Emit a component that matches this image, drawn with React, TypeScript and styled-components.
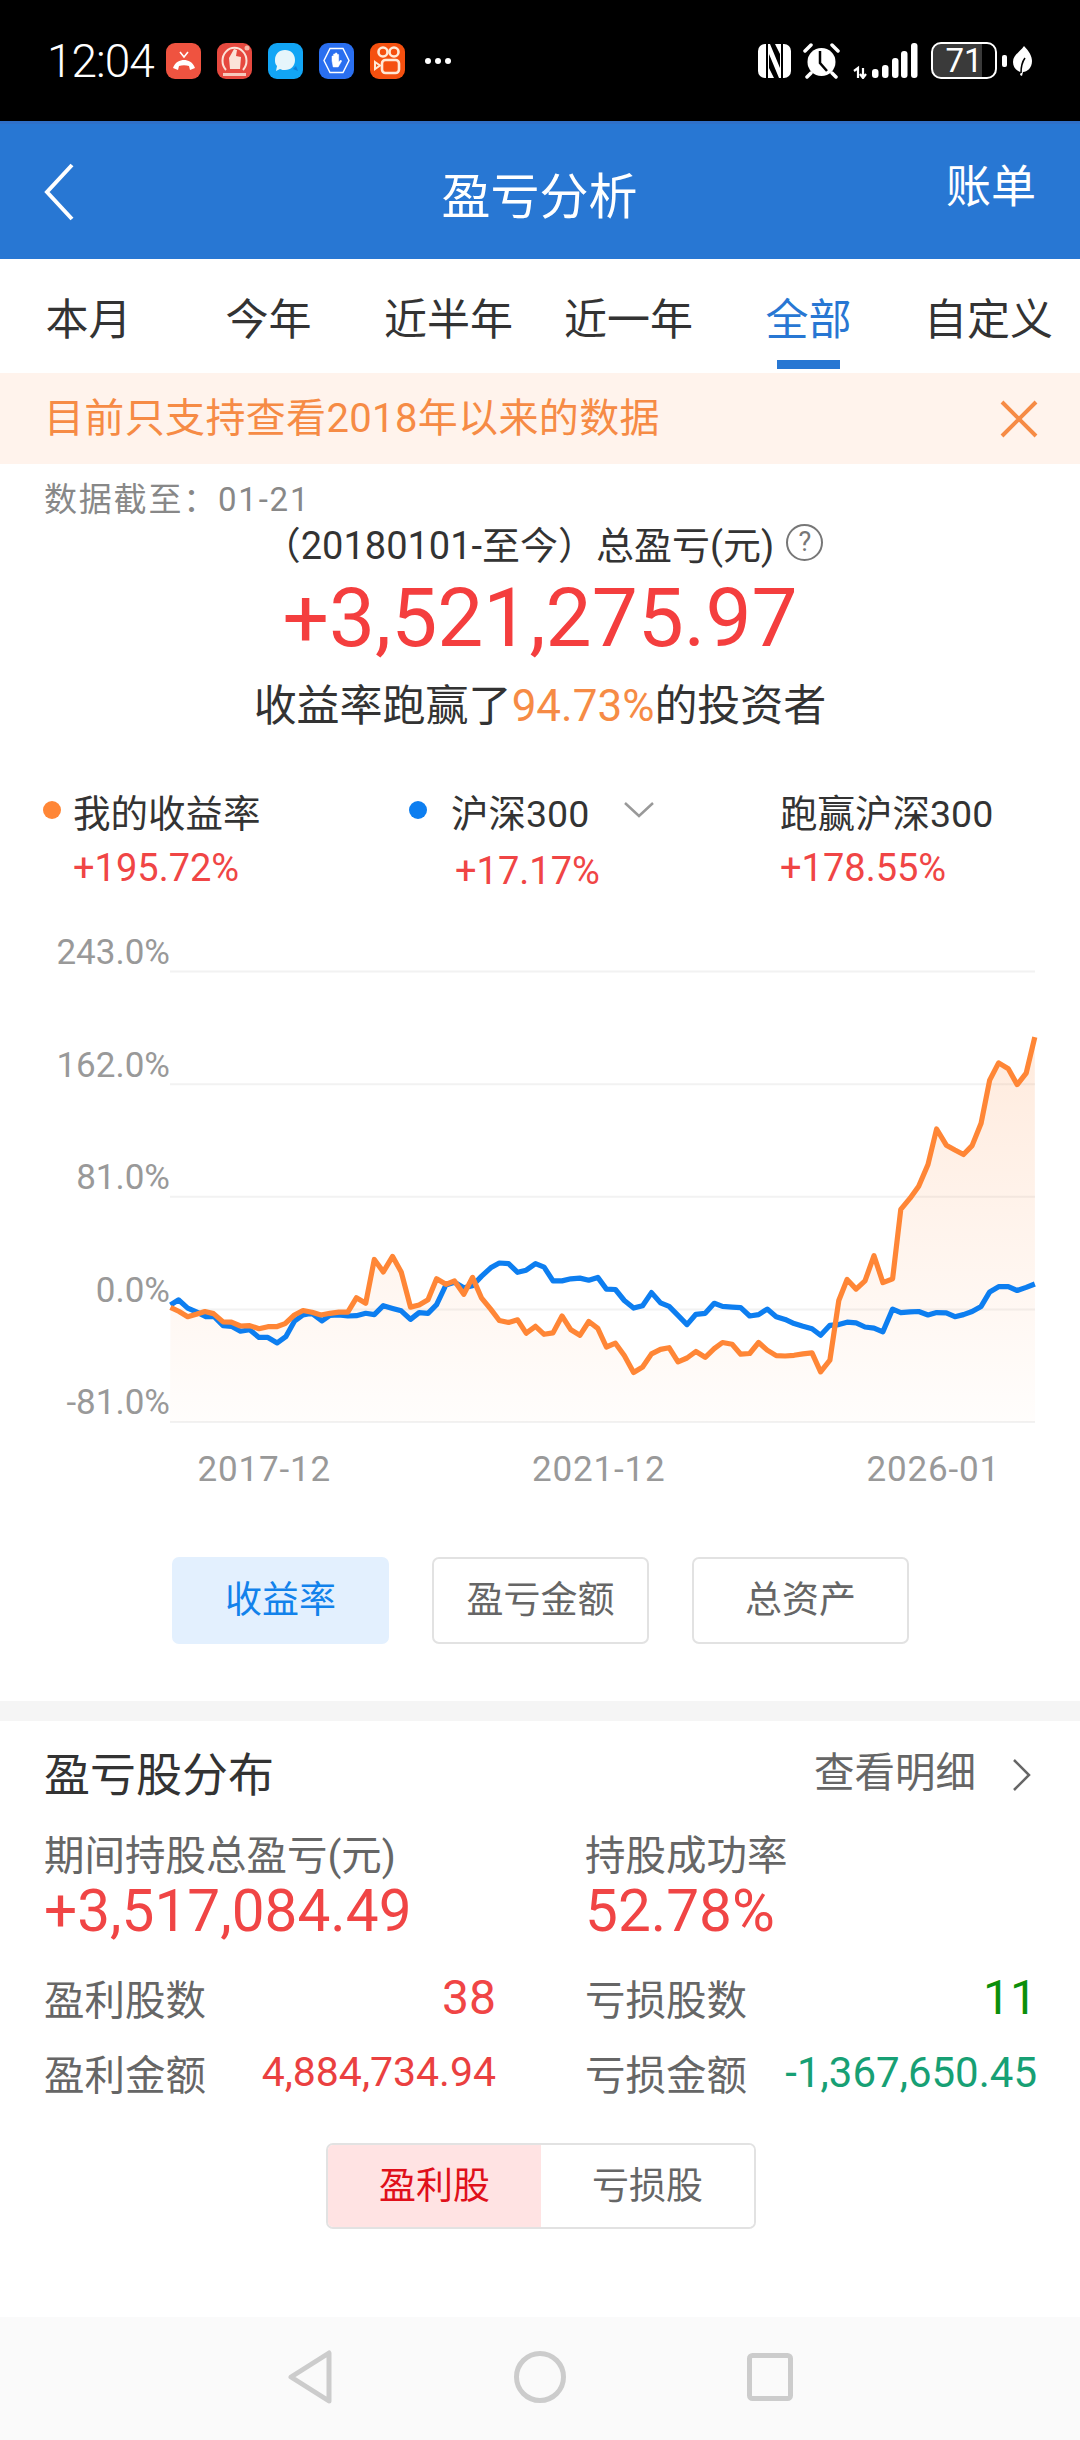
import React from "react";
import styled, { createGlobalStyle } from "styled-components";

const GlobalStyle = createGlobalStyle`
    html, body {
        margin: 0;
        padding: 0;
        background: #fff;
    }
    * {
        box-sizing: border-box;
    }
`
const Page = styled.div`
    width: 1080px;
    height: 2440px;
    display: flex;
    flex-direction: column;
    background: #fff;
    overflow: hidden;
    font-family: Roboto, "Noto Sans CJK SC", sans-serif;
    color: #333;
`
const StatusBar = styled.div`
    height: 121px;
    flex: none;
    background: #000;
    display: flex;
    align-items: center;
    padding: 0 48px 0 47px;
    color: #fff;
`
const Clock = styled.span`
    width: 119px;
    font-size: 46px;
    line-height: 50px;
    letter-spacing: -1px;
    font-weight: 300;
`
const AppTiles = styled.div`
    display: flex;
    gap: 16px;
`
const AppTile = styled.div<{ $bg: string }>`
    width: 35px;
    height: 36px;
    border-radius: 9px;
    background: ${(p) => p.$bg};
    display: flex;
    align-items: center;
    justify-content: center;
`
const MoreDots = styled.span`
    display: flex;
    gap: 4px;
    margin-left: 20px;

    i {
        width: 6px;
        height: 6px;
        border-radius: 50%;
        background: #fff;
    }
`
const StatusRight = styled.div`
    margin-left: auto;
    display: flex;
    align-items: center;
`
const Battery = styled.div`
    width: 66px;
    height: 37px;
    margin-left: 13px;
    border: 2.5px solid #fff;
    border-radius: 10px;
    overflow: hidden;
    display: flex;
    align-items: center;
    justify-content: center;
    font-size: 33px;
    line-height: 32px;
    background: linear-gradient(90deg, #3a3a3a 79%, #000 79%);
`
const BatteryNub = styled.i`
    width: 5px;
    height: 12px;
    margin-left: 5px;
    border-radius: 2px;
    background: #fff;
`
const Header = styled.div`
    height: 138px;
    flex: none;
    background: #2877d3;
    border-top: 3px solid #2f70c8;
    display: grid;
    grid-template-columns: 1fr auto 1fr;
    align-items: center;
    padding: 0 44px 0 43px;
    color: #fff;
`
const Title = styled.div`
    font-size: 49px;
    line-height: 56px;
    margin-top: 12px;
`
const Bill = styled.div`
    justify-self: end;
    font-size: 45px;
    line-height: 52px;
    margin-top: -8px;
`
const Tabs = styled.div`
    height: 114px;
    flex: none;
    display: grid;
    grid-template-columns: repeat(6, 180px);
`
const Tab = styled.div<{ $active?: boolean }>`
    display: flex;
    flex-direction: column;
    align-items: center;
    padding: 36px 3px 0 0;
    font-size: 43px;
    line-height: 50px;
    color: ${(p) => (p.$active ? "#2877d3" : "#333")};
`
const TabMark = styled.i`
    width: 63px;
    height: 9px;
    margin-top: 15px;
    background: #2877d3;
`
const Notice = styled.div`
    height: 91px;
    flex: none;
    background: #fff3ec;
    color: #f68b45;
    display: flex;
    align-items: center;
    justify-content: space-between;
    padding: 0 42px 8px 44px;
    font-size: 40px;
    letter-spacing: 0.35px;

    svg {
        margin-top: 8px;
    }
`
const DateLine = styled.div`
    margin-top: 16px;
    padding-left: 44px;
    font-size: 33px;
    line-height: 40px;
    letter-spacing: 1.8px;
    color: #888;
`
const TotalLine = styled.div`
    margin-top: 2px;
    height: 40px;
    display: flex;
    align-items: center;
    justify-content: center;
    padding-left: 6px;
    font-size: 38px;
    color: #333;
`
const HelpMark = styled.span`
    width: 37px;
    height: 37px;
    margin-left: 12px;
    border: 2px solid #777;
    border-radius: 50%;
    display: flex;
    align-items: center;
    justify-content: center;
    font-size: 27px;
    color: #777;
`
const BigAmount = styled.div`
    margin-top: 10px;
    text-align: center;
    font-size: 82px;
    line-height: 92px;
    color: #f43e3e;
`
const Beat = styled.div`
    margin-top: 17px;
    text-align: center;
    font-size: 43px;
    line-height: 50px;
    color: #333;

    em {
        font-style: normal;
        font-size: 44px;
        color: #f68b45;
    }
`
const Legend = styled.div`
    margin-top: 59px;
    padding-left: 43px;
    display: grid;
    grid-template-columns: 366px 371px 1fr;
`
const LegendHead = styled.div`
    height: 40px;
    display: flex;
    align-items: center;
    font-size: 37.5px;
    color: #333;
`
const LegendDot = styled.i<{ $color: string; $gap: number }>`
    width: 18px;
    height: 18px;
    margin-right: ${(p) => p.$gap}px;
    border-radius: 50%;
    background: ${(p) => p.$color};
`
const LegendValue = styled.div<{ $indent: number; $drop?: boolean }>`
    margin-top: ${(p) => (p.$drop ? 21 : 18)}px;
    padding-left: ${(p) => p.$indent}px;
    font-size: 38px;
    line-height: 40px;
    color: #f04545;
`
const ChartBlock = styled.div`
    margin-top: 43px;
    height: 488px;
    display: flex;
`
const AxisLabels = styled.div`
    width: 170px;
    flex: none;
    display: flex;
    flex-direction: column;
    gap: 75.2px;
    align-items: flex-end;
`
const AxisLabel = styled.span`
    height: 37.4px;
    font-size: 35px;
    line-height: 37px;
    color: #999;
`
const Plot = styled.svg`
    display: block;
    overflow: visible;
`
const DateAxis = styled.div`
    margin-top: 28px;
    padding-left: 97px;
    display: grid;
    grid-template-columns: repeat(3, 334.5px);
    text-align: center;
    font-size: 35px;
    line-height: 40px;
    letter-spacing: 0.8px;
    color: #999;
`
const ChartButtons = styled.div`
    margin-top: 67px;
    padding-left: 172px;
    display: flex;
    gap: 43px;
`
const ChartButton = styled.div<{ $active?: boolean }>`
    width: 217px;
    height: 87px;
    padding-bottom: 7px;
    border-radius: 7px;
    display: flex;
    align-items: center;
    justify-content: center;
    font-size: 37px;
    border: 2px solid ${(p) => (p.$active ? "#e3f0fe" : "#e2e2e2")};
    background: ${(p) => (p.$active ? "#e3f0fe" : "#fff")};
    color: ${(p) => (p.$active ? "#1282eb" : "#666")};
`
const Divider = styled.div`
    margin-top: 57px;
    height: 20px;
    flex: none;
    background: #f5f5f5;
`
const Section = styled.div`
    padding: 29px 43px 0 44px;
`
const SectionHead = styled.div`
    height: 50px;
    display: flex;
    align-items: center;
    justify-content: space-between;
`
const SectionTitle = styled.div`
    font-size: 46px;
    line-height: 50px;
    color: #333;
`
const DetailLink = styled.div`
    display: flex;
    align-items: center;
    gap: 36px;
    padding-right: 5px;
    font-size: 40.5px;
    line-height: 44px;
    color: #666;

    span {
        margin-top: -4px;
    }
`
const StatGrid = styled.div`
    margin-top: 34px;
    display: grid;
    grid-template-columns: 452px 452px;
    column-gap: 89px;
`
const StatLabel = styled.div`
    font-size: 40.5px;
    line-height: 44px;
    color: #666;
`
const StatValue = styled.div`
    margin-top: 3px;
    font-size: 58.5px;
    line-height: 60px;
    color: #f04545;
`
const DetailRow = styled.div<{ $gap: number }>`
    margin-top: ${(p) => p.$gap}px;
    height: 50px;
    display: flex;
    align-items: center;
    justify-content: space-between;
    font-size: 40.5px;
    color: #666;
`
const DetailValue = styled.span<{ $color: string; $size: number }>`
    font-size: ${(p) => p.$size}px;
    color: ${(p) => p.$color};
`
const Toggle = styled.div`
    margin: 46px 0 0 282px;
    width: 430px;
    height: 86px;
    display: flex;
    border: 2px solid #e2e2e2;
    border-radius: 7px;
    overflow: hidden;
    font-size: 37px;
`
const ToggleItem = styled.div<{ $active?: boolean }>`
    flex: 1;
    display: flex;
    align-items: center;
    justify-content: center;
    padding-bottom: 7px;
    background: ${(p) => (p.$active ? "#ffe3e3" : "#fff")};
    color: ${(p) => (p.$active ? "#e0101a" : "#666")};
`
const NavBar = styled.div`
    margin-top: auto;
    height: 123px;
    flex: none;
    background: #fafafa;
    display: flex;
    align-items: center;
    padding: 0 0 4px 287px;
    gap: 181px;
`

// points read off the reference, in units of its 2.904x crop
const orangeLine = [
    495,1125,520,1137,545,1152,570,1145,595,1137,620,1143,648,1167,672,1168,698,1179,725,1178,752,1187,778,1181,803,1181,828,1172,855,1147,880,1134,906,1139,932,1147,958,1142,984,1139,1010,1139,1035,1097,1062,1113,1087,986,1113,1022,1140,977,1165,1022,1192,1124,1217,1118,1243,1103,1268,1042,1295,1058,1320,1048,1347,1087,1372,1038,1398,1097,1425,1130,1450,1163,1477,1169,1503,1161,1528,1200,1555,1180,
    1580,1203,1606,1199,1632,1150,1658,1190,1684,1206,1710,1166,1736,1186,1761,1240,1787,1229,1813,1265,1840,1314,1866,1298,1892,1260,1918,1247,1943,1242,1969,1283,1995,1272,2021,1253,2048,1270,2074,1245,2098,1227,2126,1232,2151,1261,2177,1259,2203,1227,2228,1249,2254,1265,2280,1266,2306,1264,2332,1260,2358,1257,2383,1312,2410,1278,2436,1105,2460,1044,2486,1072,2512,1048,2538,975,2564,1053,2592,1042,2616,840,2643,808,2668,773,2695,710,2720,607,2748,654,2773,668,2798,681,2823,655,2849,590,2874,465,2900,415,2928,432,2954,478,2980,445,3005,340,
]
const blueLine = [
    495,1118,518,1103,545,1127,570,1138,598,1152,622,1152,648,1178,672,1180,698,1194,725,1190,752,1212,778,1212,805,1228,830,1210,855,1165,880,1147,906,1142,935,1164,958,1148,984,1147,1010,1150,1035,1149,1062,1142,1087,1146,1113,1120,1140,1128,1165,1135,1192,1160,1217,1140,1243,1142,1268,1117,1295,1060,1320,1052,1347,1068,1372,1062,1398,1035,1425,1010,1450,996,1477,998,1503,1023,1528,1017,1555,998,
    1580,1008,1606,1048,1632,1048,1658,1042,1684,1040,1710,1046,1736,1038,1761,1072,1787,1073,1813,1105,1840,1127,1866,1120,1892,1082,1918,1112,1943,1122,1969,1148,1995,1175,2021,1145,2048,1142,2074,1113,2098,1122,2126,1124,2151,1126,2177,1150,2203,1146,2228,1130,2254,1152,2280,1160,2306,1172,2332,1180,2358,1187,2383,1206,2410,1177,2436,1175,2460,1168,2486,1170,2512,1182,2538,1185,2564,1196,2592,1130,2616,1140,2643,1138,2668,1137,2695,1147,2720,1140,2748,1141,2773,1152,2798,1146,2823,1137,2849,1122,2874,1080,2900,1065,2928,1065,2954,1076,2980,1067,3005,1057,
]

const toPath = (pts: number[]) => {
    const out: string[] = []
    for (let i = 0; i < pts.length; i += 2) {
        const x = pts[i] / 2.904 - 170
        const y = pts[i + 1] / 2.904 + 920 - 934
        out.push(`${x.toFixed(1)},${y.toFixed(1)}`)
    }
    return out
}

const gridYs = [37.6, 150.2, 262.8, 375.4, 488]

const ProfitChart = () => {
    const orange = toPath(orangeLine)
    return (
        <Plot width="865" height="488" viewBox="0 0 865 488">
            <defs>
                <linearGradient id="profitFill" x1="0" y1="100" x2="0" y2="488" gradientUnits="userSpaceOnUse">
                    <stop offset="0" stopColor="#ff8636" stopOpacity="0.17" />
                    <stop offset="1" stopColor="#ff8636" stopOpacity="0.015" />
                </linearGradient>
            </defs>
            {gridYs.map((y) => (
                <line key={y} x1="0" x2="865" y1={y} y2={y} stroke="#f2f2f2" strokeWidth="2" />
            ))}
            <polygon points={`${orange.join(" ")} 865,488 0,488`} fill="url(#profitFill)" />
            <polyline points={toPath(blueLine).join(" ")} fill="none" stroke="#0d7ef0" strokeWidth="5.2" strokeLinejoin="round" />
            <polyline points={orange.join(" ")} fill="none" stroke="#ff8636" strokeWidth="5.2" strokeLinejoin="round" />
        </Plot>
    )
}

const MissedCallIcon = () => (
    <svg width="26" height="26" viewBox="0 0 26 26">
        <path d="M9 4l4 5 4-5" fill="none" stroke="#fff" strokeWidth="1.6" />
        <path d="M2 20c2-6 7-8 11-8s9 2 11 8l-5 2-1-4c-3-1-7-1-10 0l-1 4z" fill="#fff" />
    </svg>
)
const ThumbIcon = () => (
    <svg width="35" height="36" viewBox="0 0 35 36">
        <path d="M9 27a12 13 0 1 1 17 0" fill="none" stroke="#fbe3d8" strokeWidth="2" />
        <path d="M12 15l5-9 3 1-1 6 5 1-1 12H13z" fill="#fbe3d8" />
        <circle cx="30" cy="5" r="2.5" fill="#f6b7a8" />
        <rect x="6" y="30" width="23" height="3" fill="#f6c9bc" />
    </svg>
)
const BubbleIcon = () => (
    <svg width="28" height="28" viewBox="0 0 28 28">
        <path d="M21 22l5 2-2-5z" fill="#0f7fd8" />
        <path d="M13 3c6 0 10 4 10 10s-4 10-10 10c-2 0-3 0-5-1l-4 2 1-5c-2-2-2-4-2-6C3 7 7 3 13 3z" fill="#e6f5fb" />
    </svg>
)
const HandIcon = () => (
    <svg width="29" height="29" viewBox="0 0 29 29">
        <path d="M8 2.5h13l6 12-6 12H8l-6-12z" fill="none" stroke="#fff" strokeWidth="1.4" />
        <path d="M10 15V10h1.6v4V8h1.7v6V7h1.7v7V8.500h1.700V16l2-2 1 1-3.500 6h-5z" fill="#fff" stroke="#fff" strokeWidth="0.5" />
    </svg>
)
const KuaishouIcon = () => (
    <svg width="29" height="31" viewBox="0 0 29 31">
        <circle cx="10" cy="7" r="4.500" fill="none" stroke="#ffe9d6" strokeWidth="2.600" />
        <circle cx="21" cy="7" r="4.500" fill="none" stroke="#ffe9d6" strokeWidth="2.600" />
        <rect x="9" y="15" width="17" height="13" rx="3.500" fill="none" stroke="#ffe9d6" strokeWidth="2.600" />
        <path d="M2 17l5 3.500-5 3.500z" fill="none" stroke="#ffe9d6" strokeWidth="2" />
    </svg>
)
const NfcIcon = () => (
    <svg width="33" height="34" viewBox="0 0 33 34">
        <rect width="33" height="34" rx="7" fill="#fff" />
        <path d="M9 0v34M24 0v34" fill="none" stroke="#000" strokeWidth="2" />
        <path d="M12 0h5l5 10v14zM21 34h-5L11 24V10z" fill="#000" />
    </svg>
)
const AlarmIcon = () => (
    <svg width="37" height="36" viewBox="0 0 37 36" style={{ marginLeft: 12 }}>
        <circle cx="18.5" cy="19" r="14" fill="#fff" />
        <path d="M17 8v12l7 8" fill="none" stroke="#000" strokeWidth="2.500" />
        <path d="M2 8l6-6M35 8l-6-6M8 30l-4 4M29 30l4 4" stroke="#fff" strokeWidth="3.500" strokeLinecap="round" />
    </svg>
)
const SignalIcon = () => (
    <svg width="65" height="36" viewBox="0 0 65 36" style={{ marginLeft: 13 }}>
        <path d="M1 28l4-3v10M10 25v10M7 31l3 4 3-4" fill="none" stroke="#fff" strokeWidth="2.200" />
        {[
            [19, 26],
            [29, 22],
            [39, 15],
            [48, 8],
            [58, 0],
        ].map(([x, y]) => (
            <rect key={x} x={x} y={y} width="6.500" height={35 - y} rx="3" fill="#fff" />
        ))}
    </svg>
)
const LeafIcon = () => (
    <svg width="19" height="30" viewBox="0 0 19 30" style={{ marginLeft: 6 }}>
        <path d="M11 0c5 5 8 10 8 15 0 7-5 11-9 11l-1 4-2-1 1-3C3 25 0 21 0 16 0 9 7 6 11 0z" fill="#fff" />
        <path d="M8 27c0-6 1-11 4-15" fill="none" stroke="#000" strokeWidth="1.600" />
    </svg>
)

const App: React.FunctionComponent = () => {
    return (
        <Page>
            <GlobalStyle />
            <StatusBar>
                <Clock>12:04</Clock>
                <AppTiles>
                    <AppTile $bg="#ef5340"><MissedCallIcon /></AppTile>
                    <AppTile $bg="#e6493f"><ThumbIcon /></AppTile>
                    <AppTile $bg="#12a5f5"><BubbleIcon /></AppTile>
                    <AppTile $bg="#2a6ff0"><HandIcon /></AppTile>
                    <AppTile $bg="#f5500f"><KuaishouIcon /></AppTile>
                </AppTiles>
                <MoreDots><i /><i /><i /></MoreDots>
                <StatusRight>
                    <NfcIcon />
                    <AlarmIcon />
                    <SignalIcon />
                    <Battery>71</Battery>
                    <BatteryNub />
                    <LeafIcon />
                </StatusRight>
            </StatusBar>

            <Header>
                <svg width="32" height="58" viewBox="0 0 32 58">
                    <path d="M29 2L4 29l25 27" fill="none" stroke="#fff" strokeWidth="4" />
                </svg>
                <Title>盈亏分析</Title>
                <Bill>账单</Bill>
            </Header>

            <Tabs>
                <Tab>本月</Tab>
                <Tab>今年</Tab>
                <Tab>近半年</Tab>
                <Tab>近一年</Tab>
                <Tab $active>全部<TabMark /></Tab>
                <Tab>自定义</Tab>
            </Tabs>

            <Notice>
                目前只支持查看2018年以来的数据
                <svg width="38" height="38" viewBox="0 0 38 38">
                    <path d="M2 2l34 34M36 2L2 36" fill="none" stroke="#f68b45" strokeWidth="4" />
                </svg>
            </Notice>

            <DateLine>数据截至：01-21</DateLine>
            <TotalLine>
                （20180101-至今）总盈亏(元)
                <HelpMark>?</HelpMark>
            </TotalLine>
            <BigAmount>+3,521,275.97</BigAmount>
            <Beat>收益率跑赢了<em>94.73%</em>的投资者</Beat>

            <Legend>
                <div>
                    <LegendHead><LegendDot $color="#ff8636" $gap={12} />我的收益率</LegendHead>
                    <LegendValue $indent={30}>+195.72%</LegendValue>
                </div>
                <div>
                    <LegendHead>
                        <LegendDot $color="#0d7ef0" $gap={24} />沪深300
                        <svg width="30" height="16" viewBox="0 0 30 16" style={{ marginLeft: 35 }}>
                            <path d="M1 1l14 13L29 1" fill="none" stroke="#999" strokeWidth="2.500" />
                        </svg>
                    </LegendHead>
                    <LegendValue $indent={46} $drop>+17.17%</LegendValue>
                </div>
                <div>
                    <LegendHead>跑赢沪深300</LegendHead>
                    <LegendValue $indent={0}>+178.55%</LegendValue>
                </div>
            </Legend>

            <ChartBlock>
                <AxisLabels>
                    <AxisLabel>243.0%</AxisLabel>
                    <AxisLabel>162.0%</AxisLabel>
                    <AxisLabel>81.0%</AxisLabel>
                    <AxisLabel>0.0%</AxisLabel>
                    <AxisLabel>-81.0%</AxisLabel>
                </AxisLabels>
                <ProfitChart />
            </ChartBlock>
            <DateAxis>
                <span>2017-12</span>
                <span>2021-12</span>
                <span>2026-01</span>
            </DateAxis>

            <ChartButtons>
                <ChartButton $active>收益率</ChartButton>
                <ChartButton>盈亏金额</ChartButton>
                <ChartButton>总资产</ChartButton>
            </ChartButtons>

            <Divider />

            <Section>
                <SectionHead>
                    <SectionTitle>盈亏股分布</SectionTitle>
                    <DetailLink>
                        <span>查看明细</span>
                        <svg width="20" height="32" viewBox="0 0 20 32">
                            <path d="M2 1l15 15L2 31" fill="none" stroke="#666" strokeWidth="2.500" />
                        </svg>
                    </DetailLink>
                </SectionHead>
                <StatGrid>
                    <div>
                        <StatLabel>期间持股总盈亏(元)</StatLabel>
                        <StatValue>+3,517,084.49</StatValue>
                    </div>
                    <div>
                        <StatLabel>持股成功率</StatLabel>
                        <StatValue>52.78%</StatValue>
                    </div>
                    <DetailRow $gap={31}>
                        盈利股数<DetailValue $color="#f04545" $size={48}>38</DetailValue>
                    </DetailRow>
                    <DetailRow $gap={31}>
                        亏损股数<DetailValue $color="#0b8f0b" $size={48}>11</DetailValue>
                    </DetailRow>
                    <DetailRow $gap={25}>
                        盈利金额<DetailValue $color="#ea4040" $size={41}>4,884,734.94</DetailValue>
                    </DetailRow>
                    <DetailRow $gap={25}>
                        亏损金额<DetailValue $color="#17a074" $size={42}>-1,367,650.45</DetailValue>
                    </DetailRow>
                </StatGrid>
                <Toggle>
                    <ToggleItem $active>盈利股</ToggleItem>
                    <ToggleItem>亏损股</ToggleItem>
                </Toggle>
            </Section>

            <NavBar>
                <svg width="46" height="54" viewBox="0 0 46 54">
                    <path d="M42 3v48L4 27z" fill="none" stroke="#ccc" strokeWidth="5" strokeLinejoin="round" />
                </svg>
                <svg width="52" height="52" viewBox="0 0 52 52">
                    <circle cx="26" cy="26" r="23.500" fill="none" stroke="#ccc" strokeWidth="5" />
                </svg>
                <svg width="46" height="48" viewBox="0 0 46 48">
                    <rect x="2.500" y="2.500" width="41" height="43" rx="3" fill="none" stroke="#ccc" strokeWidth="5" />
                </svg>
            </NavBar>
        </Page>
    )
}

export default App;
